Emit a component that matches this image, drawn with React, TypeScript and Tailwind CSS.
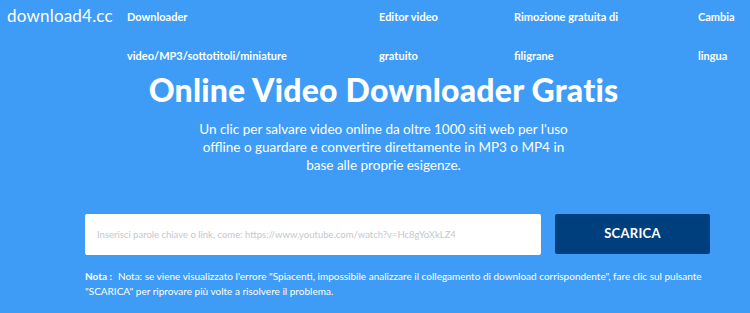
const NAV = [
  { label: "Downloader video/MP3/sottotitoli/miniature", w: "w-[175px]", ml: "" },
  { label: "Editor video gratuito", w: "w-[90px]", ml: "ml-[77px]" },
  { label: "Rimozione gratuita di filigrane", w: "w-[130px]", ml: "ml-[45px]" },
  { label: "Cambia lingua", w: "w-[50px]", ml: "ml-[54px]" },
];

export default function App() {
  return (
    <div className="w-[750px] h-[313px] overflow-hidden bg-[#3e9cf6] text-white font-['Lato','Noto_Sans',sans-serif]">
      {/* Header */}
      <header className="flex items-start h-[70px]">
        <div className="pl-[7px] pt-[5px] text-[17px] leading-[22px] w-[127px] tracking-[0.2px]">download4.cc</div>
        <nav className="flex">
          {NAV.map((n) => (
            <a key={n.label} className={`${n.ml} ${n.w} text-[11px] leading-[39px] font-bold -mt-[3px]`}>
              {n.label}
            </a>
          ))}
        </nav>
      </header>

      {/* Hero */}
      <section className="pl-[17px] flex flex-col items-center">
        <h1 className="text-[32px] leading-[40px] font-black tracking-[0.2px]">Online Video Downloader Gratis</h1>
        <p className="mt-[10px] w-[380px] text-center text-[13.5px] leading-[18px]">
          Un clic per salvare video online da oltre 1000 siti web per l'uso offline o guardare e convertire direttamente in MP3 o MP4 in base alle proprie esigenze.
        </p>
      </section>

      {/* Search */}
      <div className="pl-[85px] pt-[40px] flex">
        <input
          className="w-[456px] h-[41px] bg-white rounded-[2px] px-[12px] text-[9.5px] text-gray-700 placeholder:text-[#c5c8cc] outline-none"
          placeholder="Inserisci parole chiave o link, come: https://www.youtube.com/watch?v=Hc8gYoXkLZ4"
        />
        <button className="ml-[14px] w-[155px] h-[40px] bg-[#003f7e] rounded-[2px] text-[13px] font-bold tracking-[0.3px]">SCARICA</button>
      </div>

      <p className="pl-[85px] pr-[40px] pt-[14px] text-[10px] leading-[15px]">
        <b className="mr-[6px]">Nota :</b>Nota: se viene visualizzato l'errore "Spiacenti, impossibile analizzare il collegamento di download corrispondente", fare clic sul pulsante "SCARICA" per riprovare più volte a risolvere il problema.
      </p>
    </div>
  );
}
